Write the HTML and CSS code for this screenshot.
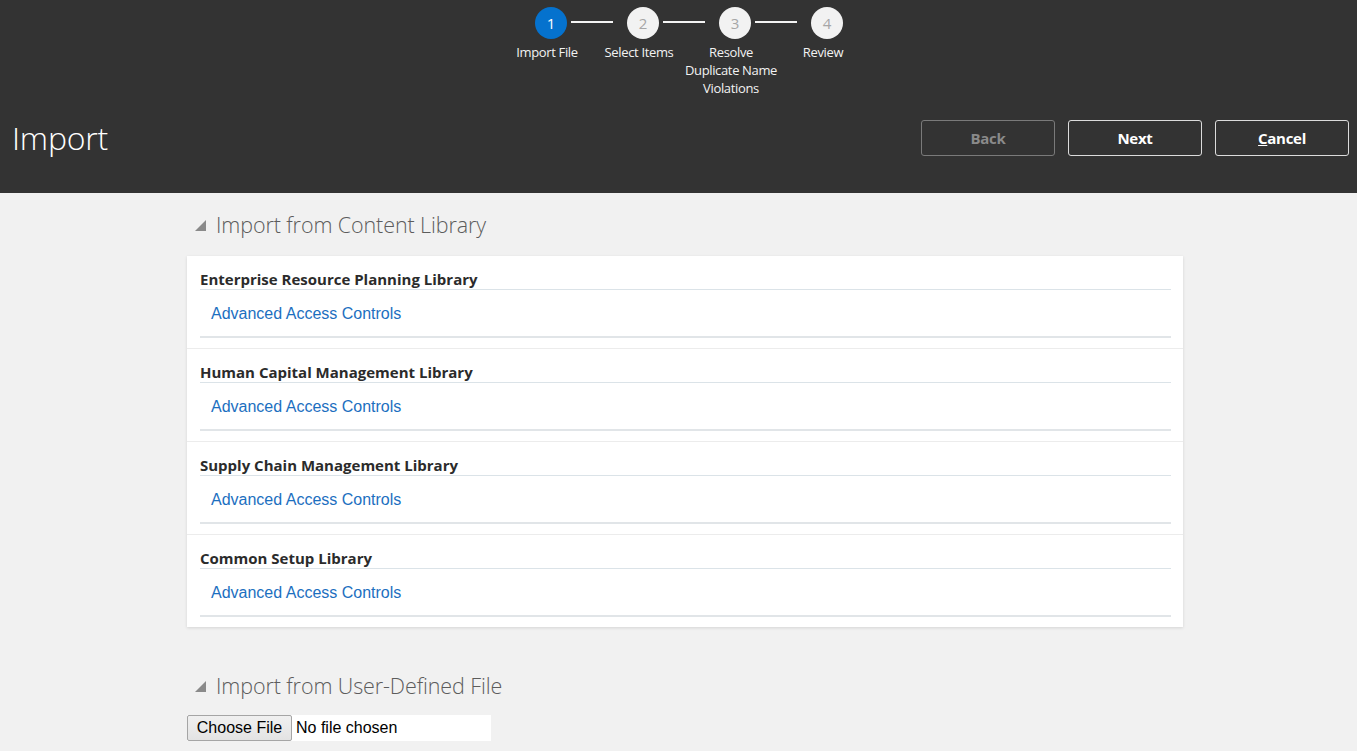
FILE: index.html
```html
<!DOCTYPE html>
<html>
<head>
<meta charset="utf-8">
<title>Import</title>
<link rel="stylesheet" href="styles.css">
</head>
<body>
<header class="topbar">
  <ol class="stepper">
    <li class="step active"><span class="circle">1</span><span class="label">Import File</span></li>
    <li class="step"><span class="circle">2</span><span class="label">Select Items</span></li>
    <li class="step"><span class="circle">3</span><span class="label">Resolve Duplicate Name Violations</span></li>
    <li class="step last"><span class="circle">4</span><span class="label">Review</span></li>
  </ol>
  <div class="titlebar">
    <h1 class="title">Import</h1>
    <div class="actions">
      <button class="btn disabled">Back</button>
      <button class="btn">Next</button>
      <button class="btn"><u>C</u>ancel</button>
    </div>
  </div>
</header>
<main class="content">
  <h2 class="section-head"><span class="tri"></span>Import from Content Library</h2>
  <div class="card">
    <div class="group">
      <div class="group-title">Enterprise Resource Planning Library</div>
      <div class="group-item"><a href="#">Advanced Access Controls</a></div>
    </div>
    <div class="group">
      <div class="group-title">Human Capital Management Library</div>
      <div class="group-item"><a href="#">Advanced Access Controls</a></div>
    </div>
    <div class="group">
      <div class="group-title">Supply Chain Management Library</div>
      <div class="group-item"><a href="#">Advanced Access Controls</a></div>
    </div>
    <div class="group">
      <div class="group-title">Common Setup Library</div>
      <div class="group-item"><a href="#">Advanced Access Controls</a></div>
    </div>
  </div>
  <h2 class="section-head second"><span class="tri"></span>Import from User-Defined File</h2>
  <div class="file">
    <span class="file-btn">Choose File</span>
    <span class="file-name">No file chosen</span>
  </div>
</main>
</body>
</html>
```

FILE: styles.css
```css
html, body {
  margin: 0;
  padding: 0;
}
body {
  background: #f1f1f1;
  font-family: "Open Sans", "Noto Sans", sans-serif;
  width: 1357px;
  height: 751px;
  overflow: hidden;
}
.topbar {
  background: #333333;
  height: 193px;
  box-sizing: border-box;
  padding-top: 7px;
}
.stepper {
  list-style: none;
  margin: 0 0 0 21px;
  padding: 0;
  display: flex;
  justify-content: center;
}
.step {
  width: 92px;
  display: flex;
  flex-direction: column;
  align-items: center;
}
.circle {
  position: relative;
  width: 32px;
  height: 32px;
  border-radius: 50%;
  background: #f2f2f2;
  color: #a6a6a6;
  font-size: 15px;
  line-height: 32px;
  text-align: center;
}
.circle::after {
  content: "";
  position: absolute;
  left: 36px;
  top: 14px;
  width: 42px;
  height: 2px;
  background: #f4f4f4;
}
.step.last .circle::after {
  display: none;
}
.step.active .circle {
  background: #0572ce;
  color: #ffffff;
}
.label {
  margin-top: 4px;
  margin-right: 8px;
  color: #f2f2f2;
  font-size: 13px;
  line-height: 18px;
  text-align: center;
  width: 96px;
  letter-spacing: -0.35px;
}
.titlebar {
  display: flex;
  justify-content: space-between;
  align-items: center;
  margin-top: 21px;
  padding: 0 8px 0 12px;
}
.title {
  margin: 0;
  color: #ffffff;
  font-weight: 300;
  font-size: 32px;
  letter-spacing: -0.2px;
  line-height: 40px;
}
.actions {
  display: flex;
  gap: 13px;
}
.btn {
  width: 134px;
  height: 36px;
  background: transparent;
  border: 1px solid #dcdcdc;
  border-radius: 3px;
  color: #ffffff;
  font-family: "Open Sans", "Noto Sans", sans-serif;
  font-weight: 700;
  font-size: 15px;
  letter-spacing: -0.3px;
  padding: 0;
}
.btn.disabled {
  border-color: #7a7a7a;
  color: #8a8a8a;
}
.content {
  margin-left: 187px;
  width: 996px;
  padding-top: 14px;
}
.section-head {
  margin: 0;
  display: flex;
  align-items: center;
  font-weight: 300;
  font-size: 21.5px;
  letter-spacing: -0.1px;
  color: #5c5c5c;
  line-height: 36px;
}
.tri {
  width: 0;
  height: 0;
  border-left: 11px solid transparent;
  border-bottom: 11px solid #8a8a8a;
  margin: 0 10px 0 8px;
}
.card {
  margin-top: 13px;
  background: #ffffff;
  box-shadow: 0 1px 3px rgba(0, 0, 0, 0.12);
}
.group {
  padding: 13px 12px 10px 13px;
  border-bottom: 1px solid #ececec;
}
.group:last-child {
  border-bottom: none;
  padding-bottom: 10px;
}
.group-title {
  color: #2b2b2b;
  font-weight: 700;
  font-size: 15px;
  line-height: 20px;
  border-bottom: 1px solid #dbe3e8;
}
.group-item {
  padding: 13px 11px 12px;
  border-bottom: 2px solid #e1e5e8;
  line-height: 20px;
}
.group-item a {
  font-family: "Liberation Sans", Arial, sans-serif;
  font-size: 16px;
  color: #1c6fbf;
  text-decoration: none;
}
.section-head.second {
  margin-top: 41px;
}
.file {
  margin-top: 11px;
  width: 304px;
  height: 26px;
  background: #ffffff;
  display: flex;
  align-items: center;
  font-family: "Liberation Sans", Arial, sans-serif;
  font-size: 16px;
  color: #000;
}
.file-btn {
  box-sizing: border-box;
  height: 26px;
  width: 105px;
  line-height: 24px;
  text-align: center;
  border: 1px solid #a5a5a5;
  border-radius: 2px;
  background: linear-gradient(#f0f0f0, #e3e3e3);
}
.file-name {
  margin-left: 4px;
}
```
